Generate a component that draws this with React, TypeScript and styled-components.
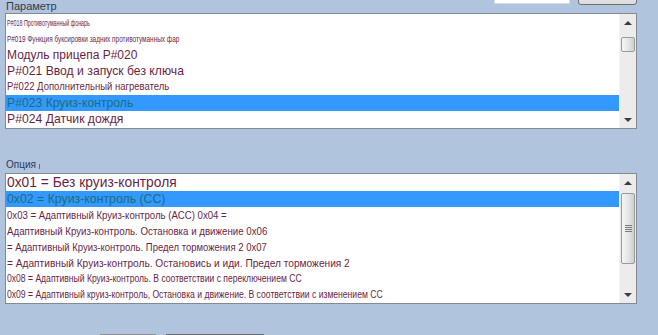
import React from 'react'
import styled, { createGlobalStyle } from 'styled-components'

type Item = {
  text: string
  size?: number
  narrow?: number
  selected?: boolean
}

const PARAMS: Item[] = [
  { text: 'P#018 Противотуманный фонарь', size: 8.5, narrow: 0.63 },
  { text: 'P#019 Функция буксировки задних противотуманных фар', size: 9, narrow: 0.715 },
  { text: 'Модуль прицепа P#020', size: 12 },
  { text: 'P#021 Ввод и запуск без ключа', size: 12.2 },
  { text: 'P#022 Дополнительный нагреватель', size: 10, narrow: 0.95 },
  { text: 'P#023 Круиз-контроль', size: 12.2, selected: true },
  { text: 'P#024 Датчик дождя', size: 12.2 },
]

const OPTIONS: Item[] = [
  { text: '0x01 = Без круиз-контроля', size: 13.8 },
  { text: '0x02 = Круиз-контроль (CC)', size: 12.3, selected: true },
  { text: '0x03 = Адаптивный Круиз-контроль (ACC) 0x04 =', size: 10.5, narrow: 0.915 },
  { text: 'Адаптивный Круиз-контроль. Остановка и движение 0x06', size: 10.5, narrow: 0.925 },
  { text: '= Адаптивный Круиз-контроль. Предел торможения 2 0x07', size: 10.5, narrow: 0.905 },
  { text: '= Адаптивный Круиз-контроль. Остановись и иди. Предел торможения 2', size: 10.5, narrow: 0.967 },
  { text: '0x08 = Адаптивный Круиз-контроль. В соответствии с переключением СС', size: 10, narrow: 0.858 },
  { text: '0x09 = Адаптивный круиз-контроль, Остановка и движение. В соответствии с изменением СС', size: 10, narrow: 0.86 },
]

const ListBox = ({
  items,
  height,
  thumbTop,
  thumbHeight,
  grip,
}: {
  items: Item[]
  height: number
  thumbTop: number
  thumbHeight: number
  grip?: boolean
}) => (
  <Box style={{ height }}>
    <Rows>
      {items.map((it) => (
        <Row key={it.text} $selected={it.selected} $size={it.size || 13}>
          <RowText style={it.narrow ? { transform: `scaleX(${it.narrow})` } : undefined}>
            {it.text}
          </RowText>
        </Row>
      ))}
    </Rows>
    <Scrollbar>
      <ArrowButton>
        <ArrowUp />
      </ArrowButton>
      <Track>
        <Thumb style={{ marginTop: thumbTop, height: thumbHeight }}>
          {grip && (
            <Grip>
              <span />
              <span />
              <span />
              <span />
            </Grip>
          )}
        </Thumb>
      </Track>
      <ArrowButton>
        <ArrowDown />
      </ArrowButton>
    </Scrollbar>
  </Box>
)

const App = () => {
  return (
    <>
      <GlobalStyle />
      <Page>
        <HeaderRow>
          <FieldLabel>Параметр</FieldLabel>
          <SearchGroup>
            <SearchInput />
            <FindButton />
          </SearchGroup>
        </HeaderRow>
        <ListBox items={PARAMS} height={116} thumbTop={6} thumbHeight={15} />
        <SmallLabel>
          Опция<Caret />
        </SmallLabel>
        <ListBox items={OPTIONS} height={131} thumbTop={2} thumbHeight={71} grip />
        <ButtonRow>
          <ActionButton $tone='#8f8f8f' />
          <ActionButton $tone='#6a6a6a' $wide />
        </ButtonRow>
      </Page>
    </>
  )
}

const GlobalStyle = createGlobalStyle`
  html, body {
    margin: 0;
    padding: 0;
    background: #b0c4de;
    overflow: hidden;
  }
  body {
    font-family: 'Liberation Sans', Arial, sans-serif;
  }
`

const Page = styled.div`
  margin-top: -17px;
  padding: 0 21px 0 5px;
  display: flex;
  flex-direction: column;
`

const HeaderRow = styled.div`
  display: flex;
  justify-content: space-between;
  align-items: flex-start;
  height: 30px;
`

const FieldLabel = styled.div`
  align-self: flex-end;
  font-size: 11px;
  line-height: 13px;
  color: #353a48;
  padding-left: 1px;
`

const SearchGroup = styled.div`
  display: flex;
  gap: 8px;
`

const SearchInput = styled.div`
  width: 74px;
  height: 19px;
  background: #fff;
  border: 1px solid #d4dbe4;
`

const FindButton = styled.div`
  width: 57px;
  height: 19px;
  border: 1px solid #707070;
  border-radius: 3px;
  background: linear-gradient(#f2f2f2, #dcdcdc);
  margin-top: 1px;
`

const Box = styled.div`
  display: flex;
  border: 1px solid #838a94;
  background: #fff;
  box-sizing: border-box;
`

const Rows = styled.div`
  flex: 1;
  padding-top: 1px;
  overflow: hidden;
`

const Row = styled.div<{ $selected?: boolean; $size: number }>`
  height: 16px;
  line-height: 16px;
  font-size: ${({ $size }) => $size}px;
  white-space: nowrap;
  padding-left: 1px;
  color: ${({ $selected }) => ($selected ? '#1b6e78' : '#6a1f45')};
  background: ${({ $selected }) => ($selected ? '#3399ff' : 'transparent')};
`

const RowText = styled.span`
  display: inline-block;
  transform-origin: left center;
`

const Scrollbar = styled.div`
  width: 17px;
  display: flex;
  flex-direction: column;
  background: #ececec;
  border-left: 1px solid #f4f4f4;
  box-sizing: border-box;
`

const ArrowButton = styled.div`
  height: 17px;
  display: flex;
  align-items: center;
  justify-content: center;
`

const ArrowUp = styled.div`
  width: 0;
  height: 0;
  border-left: 4px solid transparent;
  border-right: 4px solid transparent;
  border-bottom: 4px solid #3c3c3c;
`

const ArrowDown = styled.div`
  width: 0;
  height: 0;
  border-left: 4px solid transparent;
  border-right: 4px solid transparent;
  border-top: 4px solid #3c3c3c;
`

const Track = styled.div`
  flex: 1;
  display: flex;
  flex-direction: column;
  align-items: center;
`

const Thumb = styled.div`
  width: 14px;
  box-sizing: border-box;
  border: 1px solid #979a9e;
  border-radius: 2px;
  background: linear-gradient(90deg, #f6f6f6, #e4e4e4 55%, #cfcfcf);
  display: flex;
  align-items: center;
  justify-content: center;
`

const Grip = styled.div`
  display: flex;
  flex-direction: column;
  gap: 1px;

  span {
    display: block;
    width: 7px;
    height: 1px;
    background: #7a7a7a;
  }
`

const SmallLabel = styled.div`
  margin-top: 28px;
  height: 16px;
  font-size: 10px;
  line-height: 14px;
  color: #2c3a60;
  padding-left: 1px;
  display: flex;
  align-items: center;
`

const Caret = styled.span`
  display: inline-block;
  width: 1px;
  height: 5px;
  margin-left: 3px;
  margin-top: 3px;
  background: #3b6fd0;
`

const ButtonRow = styled.div`
  margin-top: 30px;
  padding-left: 95px;
  display: flex;
  gap: 10px;
`

const ActionButton = styled.div<{ $tone: string; $wide?: boolean }>`
  width: ${({ $wide }) => ($wide ? 98 : 56)}px;
  height: 22px;
  box-sizing: border-box;
  border: 1px solid ${({ $tone }) => $tone};
  border-top-width: 2px;
  background: #e6e6e6;
`

export default App
